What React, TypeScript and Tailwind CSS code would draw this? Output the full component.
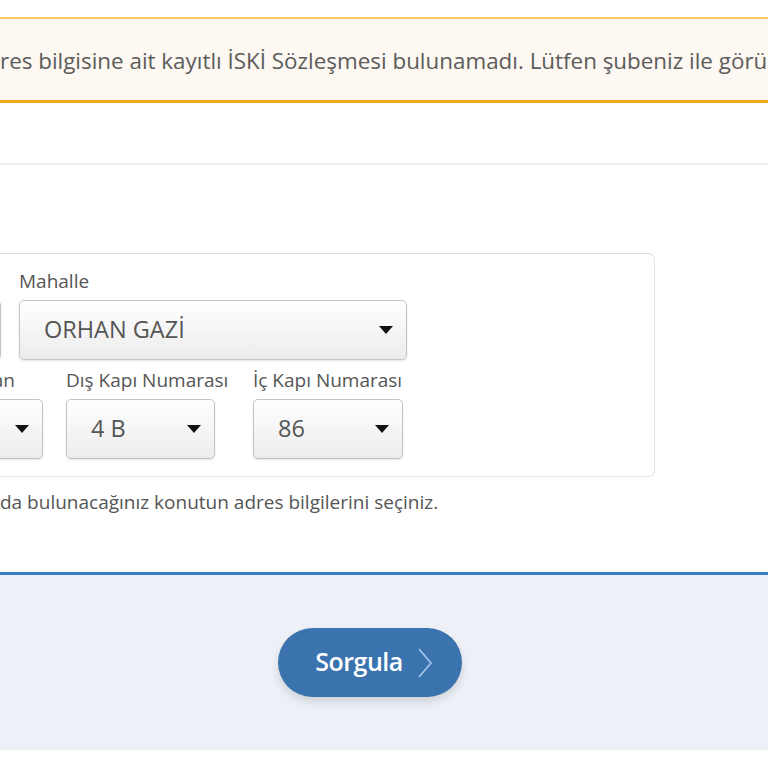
const FONT = { fontFamily: '"Open Sans", "Noto Sans", sans-serif' };

function Caret() {
  return (
    <svg className="w-[14px] h-[8px] flex-shrink-0" viewBox="0 0 14 8">
      <path d="M0 0h14L7 8z" fill="#111" />
    </svg>
  );
}

function Select({ value, width }: { value: string; width: string }) {
  return (
    <div
      className={`${width} h-[60px] flex items-center justify-between pl-6 pr-[13px] rounded-[5px] border border-[#c4c4c4] bg-gradient-to-b from-white to-[#ececec] shadow-[0_1px_2px_rgba(0,0,0,0.12)]`}
    >
      <span className="text-[23.5px] text-[#555] leading-none">{value}</span>
      <Caret />
    </div>
  );
}

export default function App() {
  return (
    <div className="w-[768px] h-[768px] overflow-hidden bg-white flex flex-col" style={FONT}>
      {/* Warning banner */}
      <div className="mt-[17px] h-[86px] flex items-center border-t-2 border-b-[3px] border-t-[#f8c865] border-b-[#f2a71c] bg-[#fdf8f1]">
        <p className="whitespace-nowrap text-[22.4px] text-[#5c5c5c] leading-none mt-[3px]">
          res bilgisine ait kayıtlı İSKİ Sözleşmesi bulunamadı. Lütfen şubeniz ile görü
        </p>
      </div>

      <div className="mt-[60px] h-[2px] bg-[#efefef]" />

      {/* Address fieldset */}
      <div className="mt-[88px] ml-[-220px] w-[875px] h-[224px] rounded-[7px] border border-dotted border-[#c9c9c9] [border-top-style:solid] [border-top-color:#dcdcdc] pl-[20px] pt-[15px]">
        <div className="flex gap-[18px]">
          <div className="flex flex-col">
            <span className="h-[24px]" />
            <div className="mt-[7px]">
              <Select value="" width="w-[200px]" />
            </div>
          </div>
          <div className="flex flex-col">
            <span className="text-[19px] text-[#555] leading-[24px]">Mahalle</span>
            <div className="mt-[7px]">
              <Select value="ORHAN GAZİ" width="w-[388px]" />
            </div>
          </div>
        </div>

        <div className="flex mt-[8px] ml-[94px]">
          <div className="flex flex-col w-[148px] flex-shrink-0">
            <span className="text-[19px] text-[#555] leading-[24px] whitespace-nowrap text-right pr-[28px]">an</span>
            <div className="mt-[7px]">
              <Select value="" width="w-[148px]" />
            </div>
          </div>
          <div className="flex flex-col w-[149px] flex-shrink-0 ml-[23px]">
            <span className="text-[19px] text-[#555] leading-[24px] whitespace-nowrap">Dış Kapı Numarası</span>
            <div className="mt-[7px]">
              <Select value="4 B" width="w-[149px]" />
            </div>
          </div>
          <div className="flex flex-col w-[150px] flex-shrink-0 ml-[38px]">
            <span className="text-[19px] text-[#555] leading-[24px] whitespace-nowrap">İç Kapı Numarası</span>
            <div className="mt-[7px]">
              <Select value="86" width="w-[150px]" />
            </div>
          </div>
        </div>
      </div>

      <p className="mt-[13px] text-[19px] text-[#555] leading-[24px] whitespace-nowrap">
        da bulunacağınız konutun adres bilgilerini seçiniz.
      </p>

      {/* Action area */}
      <div className="mt-[58px] h-[178px] border-t-[3px] border-[#3b7dc2] bg-[#edf1f7] flex justify-center pt-[53px]">
        <button className="mr-[28px] w-[184px] h-[69px] rounded-full bg-[#3b73ae] shadow-[0_5px_8px_rgba(0,0,0,0.12)] flex items-center justify-center gap-[14px] pl-[8px]">
          <span className="text-[25px] font-semibold tracking-[-0.5px] text-white leading-none -mt-[2px]">Sorgula</span>
          <svg className="w-[16px] h-[30px]" viewBox="0 0 16 30" fill="none">
            <path d="M2 1l12 14L2 29" stroke="#a9c9ef" strokeWidth="1.6" />
          </svg>
        </button>
      </div>
    </div>
  );
}
